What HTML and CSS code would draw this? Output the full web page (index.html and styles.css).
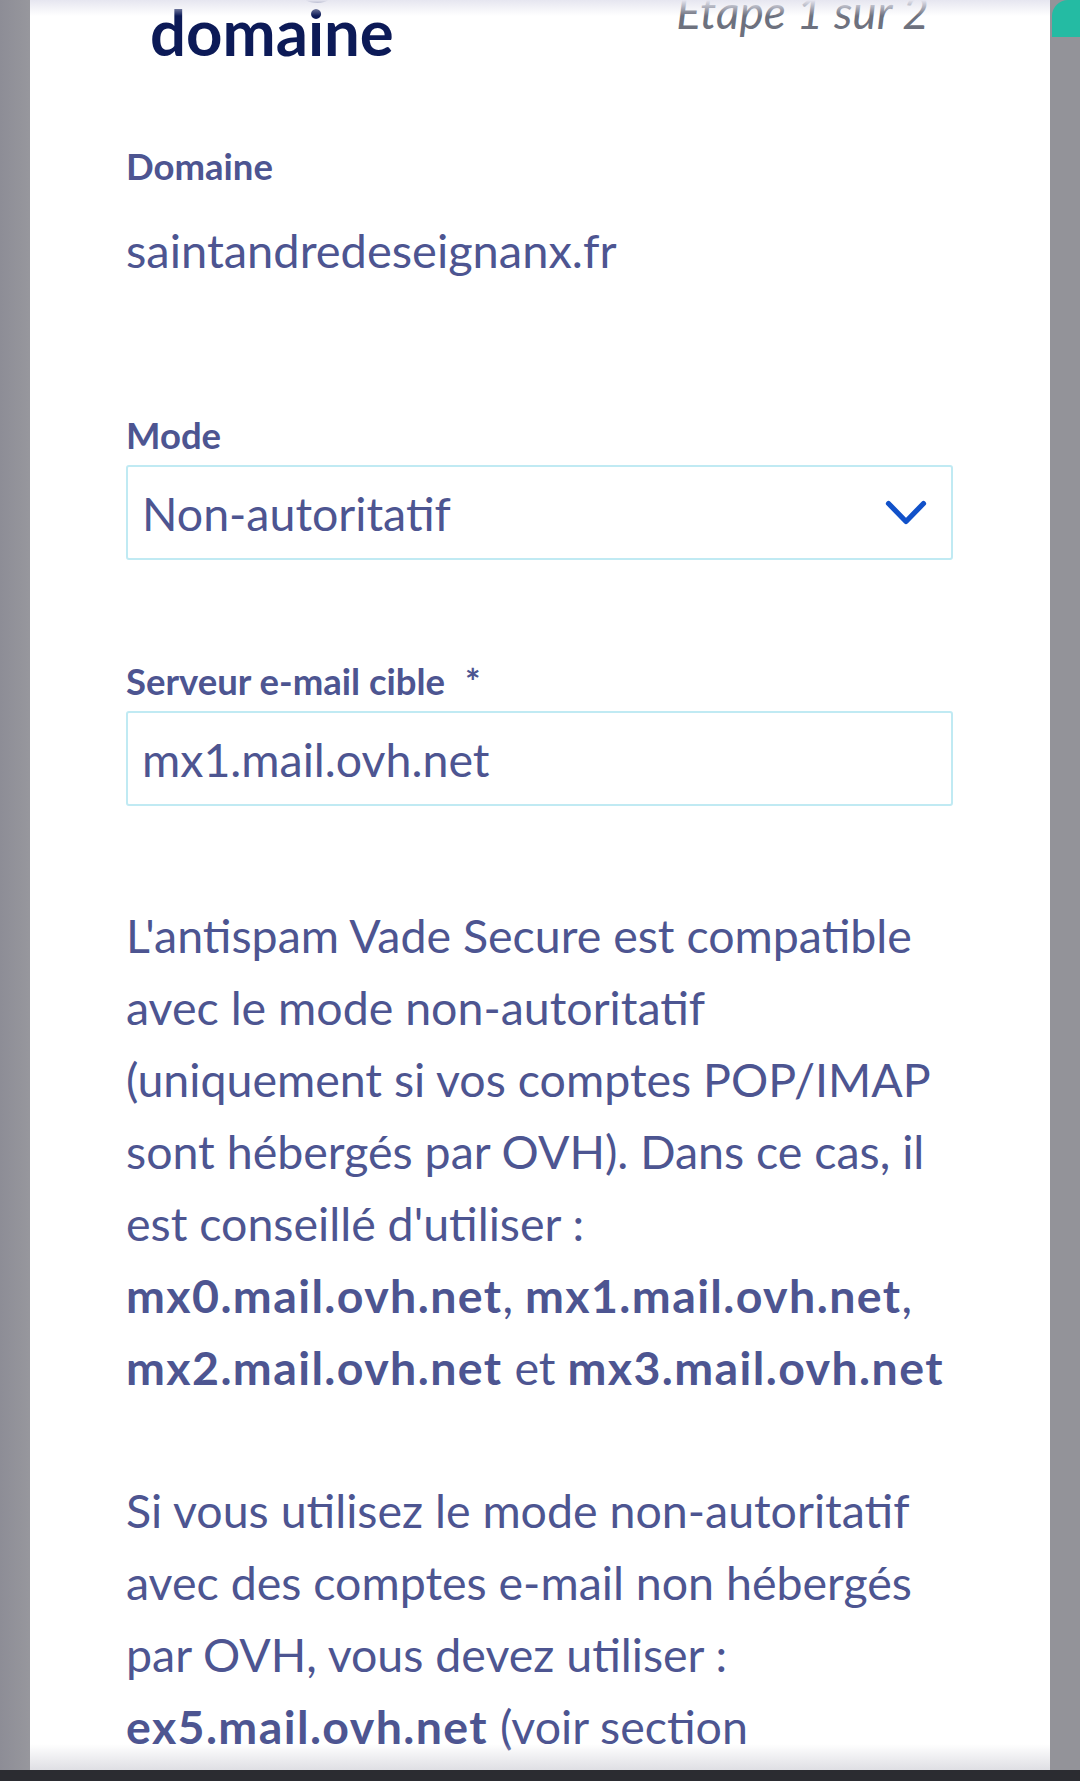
FILE: index.html
```html
<!DOCTYPE html>
<html lang="fr">
<head>
<meta charset="utf-8">
<title>Configuration du domaine</title>
<link rel="stylesheet" href="styles.css">
</head>
<body>
<div class="screen">
  <div class="side side-left"></div>
  <main class="modal">
    <header class="modal-header">
      <h1 class="title">Configuration du<br>domaine</h1>
      <span class="step">Étape 1 sur 2</span>
    </header>

    <section class="field field-static">
      <div class="label">Domaine</div>
      <div class="value">saintandredeseignanx.fr</div>
    </section>

    <section class="field">
      <label class="label">Mode</label>
      <div class="control select">
        <span>Non-autoritatif</span>
        <svg class="chevron" width="42" height="26" viewBox="0 0 42 26" aria-hidden="true">
          <path d="M3.5 3.5 L21 21.5 L38.5 3.5" fill="none" stroke="#1151c9" stroke-width="5.2" stroke-linecap="round" stroke-linejoin="round"/>
        </svg>
      </div>
    </section>

    <section class="field">
      <label class="label">Serveur e-mail cible<span class="req">*</span></label>
      <div class="control input">mx1.mail.ovh.net</div>
    </section>

    <p class="info">L'antispam Vade Secure est compatible<br>avec le mode non-autoritatif<br>(uniquement si vos comptes POP/IMAP<br>sont hébergés par OVH). Dans ce cas, il<br>est conseillé d'utiliser :<br><strong>mx0.mail.ovh.net</strong>, <strong>mx1.mail.ovh.net</strong>,<br><strong>mx2.mail.ovh.net</strong> et <strong>mx3.mail.ovh.net</strong></p>

    <p class="info">Si vous utilisez le mode non-autoritatif<br>avec des comptes e-mail non hébergés<br>par OVH, vous devez utiliser :<br><strong>ex5.mail.ovh.net</strong> (voir section</p>
  </main>
  <div class="side side-right"><span class="tab"></span></div>
</div>
<div class="navbar"></div>
</body>
</html>
```

FILE: styles.css
```css
* {
  box-sizing: border-box;
}

html,
body {
  margin: 0;
  padding: 0;
}

body {
  width: 1080px;
  height: 1781px;
  overflow: hidden;
  background: #2b2c31;
  font-family: Lato, "Noto Sans", sans-serif;
}

.screen {
  display: flex;
  height: 1770px;
}

.side {
  position: relative;
  flex: none;
  width: 30px;
  background: #939399;
}

.side-left {
  background: linear-gradient(to right, #8d8d96, #97979d);
}

.tab {
  position: absolute;
  top: 0;
  left: 2px;
  right: 0;
  height: 37px;
  background: #24bba3;
  border-top-left-radius: 16px;
}

.modal {
  position: relative;
  flex: 1;
  overflow: hidden;
  padding: 0 97px 0 96px;
  background: #ffffff;
  color: #4d5591;
}

.modal::before {
  content: "";
  position: absolute;
  top: 0;
  left: 0;
  right: 0;
  height: 16px;
  background: linear-gradient(#e6e6f0, rgba(255, 255, 255, 0));
}

.modal::after {
  content: "";
  position: absolute;
  bottom: 0;
  left: 0;
  right: 0;
  height: 26px;
  background: linear-gradient(rgba(255, 255, 255, 0), #dfdfe4);
}

.modal-header {
  display: flex;
  justify-content: space-between;
  align-items: flex-start;
  margin-top: -64px;
  padding: 0 24px 0 24px;
}

.title {
  margin: 0;
  font-size: 63.5px;
  line-height: 64px;
  font-weight: 700;
  color: #0c1a57;
}

.step {
  margin-top: 51px;
  font-size: 46px;
  line-height: 50px;
  font-style: italic;
  color: #6d717e;
  white-space: nowrap;
}

.field {
  display: flex;
  flex-direction: column;
  margin-top: 99px;
}

.field-static {
  margin-top: 80px;
}

.field-static .value {
  margin-top: 26px;
  margin-bottom: 28px;
}

.label {
  display: block;
  font-size: 36.5px;
  line-height: 44px;
  font-weight: 700;
  color: #4d5591;
}

.req {
  margin-left: 20px;
}

.value {
  font-size: 47px;
  line-height: 72px;
}

.control {
  display: flex;
  align-items: center;
  justify-content: space-between;
  height: 95px;
  margin-top: 8px;
  padding: 0 24px 0 14px;
  border: 2px solid #c0eaf3;
  border-radius: 3px;
  font-size: 46.5px;
  line-height: 72px;
  color: #4d5591;
}

.chevron {
  flex: none;
  display: block;
}

.info {
  margin: 93px -40px 0 0;
  font-size: 46.5px;
  line-height: 72px;
}

.info + .info {
  margin-top: 71px;
}

.info strong {
  font-weight: 700;
  letter-spacing: 1.4px;
}

.navbar {
  height: 11px;
  background: #2b2c31;
}
```
